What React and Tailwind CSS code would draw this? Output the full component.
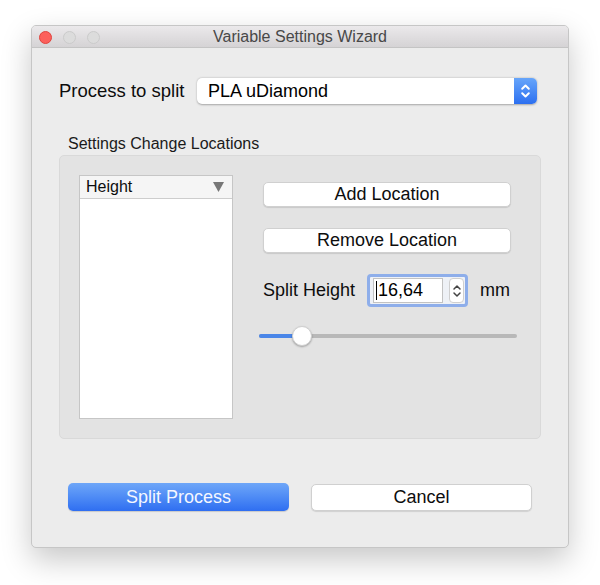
import React from 'react';

const Chevrons = ({ color = '#fff', w = 10, h = 16, sw = 1.6 }) => (
  <svg width={w} height={h} viewBox="0 0 10 16" fill="none">
    <path d="M2 6 L5 3 L8 6" stroke={color} strokeWidth={sw} strokeLinecap="round" strokeLinejoin="round" />
    <path d="M2 10 L5 13 L8 10" stroke={color} strokeWidth={sw} strokeLinecap="round" strokeLinejoin="round" />
  </svg>
);

const MacButton = ({ children, className = '' }) => (
  <button
    className={`flex items-center justify-center bg-white rounded-[5px] border border-[#d0d0d0] shadow-[0_1px_1px_rgba(0,0,0,0.12)] text-[18px] text-[#0d0d0d] ${className}`}
  >
    {children}
  </button>
);

const App = () => {
  return (
    <div
      className="w-[600px] h-[585px] bg-white pt-[25px] pl-[31px]"
      style={{ fontFamily: '"Liberation Sans", Arial, sans-serif' }}
    >
      <div className="w-[538px] h-[523px] flex flex-col rounded-[5px] border border-[#c6c6c6] bg-[#ececec] overflow-hidden shadow-[0_12px_30px_rgba(0,0,0,0.22)]">
        {/* title bar */}
        <div className="h-[22px] shrink-0 grid grid-cols-[1fr_auto_1fr] items-center bg-gradient-to-b from-[#ebe9eb] to-[#d5d3d5] border-b border-[#c4c4c4]">
          <div className="flex items-center gap-[11px] pl-[7px]">
            <span className="w-[13px] h-[13px] rounded-full bg-[#fc605c] border border-[#e0443e]" />
            <span className="w-[13px] h-[13px] rounded-full bg-[#dcdcdc] border border-[#cbcbcb]" />
            <span className="w-[13px] h-[13px] rounded-full bg-[#dcdcdc] border border-[#cbcbcb]" />
          </div>
          <div className="text-[16px] leading-[22px] text-[#484848]">Variable Settings Wizard</div>
          <div />
        </div>

        {/* process row */}
        <div className="mt-[30px] h-[26px] flex items-center pl-[27px] pr-[31px]">
          <span className="text-[18.5px] text-[#0d0d0d]">Process to split</span>
          <div className="ml-auto w-[340px] h-[26px] flex rounded-[5px] bg-white shadow-[0_0.5px_2px_rgba(0,0,0,0.3)]">
            <div className="flex-1 flex items-center pl-[11px] text-[18px] text-[#000]">PLA uDiamond</div>
            <div className="w-[23px] h-full flex items-center justify-center rounded-r-[5px] bg-gradient-to-b from-[#67a5fa] to-[#2c6ff0]">
              <Chevrons w={11} h={18} sw={1.8} />
            </div>
          </div>
        </div>

        {/* settings group */}
        <div className="mt-[31px] pl-[36px] text-[16px] leading-[18px] text-[#1a1a1a]">Settings Change Locations</div>
        <div className="mt-[2px] ml-[27px] w-[482px] h-[284px] flex rounded-[5px] bg-[#e3e3e3] border border-[#d9d9d9] pt-[19px] pl-[19px]">
          <div className="w-[154px] h-[244px] flex flex-col bg-white border border-[#c6c6c6]">
            <div className="h-[23px] flex items-center justify-between pl-[6px] pr-[8px] bg-[#f5f5f5] border-b border-[#cdcdcd]">
              <span className="text-[16px] text-[#0d0d0d]">Height</span>
              <svg width="11" height="10" viewBox="0 0 11 10">
                <polygon points="0,0 11,0 5.5,10" fill="#777" />
              </svg>
            </div>
          </div>

          <div className="ml-[30px] w-[248px] pt-[7px] flex flex-col">
            <MacButton className="h-[25px] w-full">Add Location</MacButton>
            <MacButton className="mt-[21px] h-[25px] w-full">Remove Location</MacButton>

            <div className="mt-[21px] h-[33px] flex items-center">
              <span className="w-[104px] text-[18px] text-[#0d0d0d]">Split Height</span>
              <div className="w-[101px] h-[33px] flex items-center gap-[6px] pl-[3px] rounded-[4px] border-[3px] border-[#8eaeea] bg-[#eef1f6]">
                <div className="w-[70px] h-[25px] flex items-center bg-white border border-[#c2c2c2] pl-[2px] text-[18px] text-[#000]">
                  <span className="w-px h-[19px] bg-[#000] mr-[1px]" />
                  16,64
                </div>
                <div className="w-[15px] h-[25px] flex items-center justify-center rounded-[4px] bg-white border border-[#cfcfcf]">
                  <Chevrons color="#444" w={10} h={18} sw={1.5} />
                </div>
              </div>
              <span className="ml-[12px] text-[18px] text-[#0d0d0d]">mm</span>
            </div>

            <div className="mt-[19px] -ml-[4px] w-[258px] h-[20px] relative flex items-center">
              <div className="w-full h-[4px] flex rounded-full overflow-hidden bg-[#b8b8b8]">
                <div className="w-[43px] h-full bg-[#4a86e8]" />
              </div>
              <div className="absolute left-[33px] top-0 w-[20px] h-[20px] rounded-full bg-white border border-[#d0d0d0] shadow-[0_1px_2px_rgba(0,0,0,0.3)]" />
            </div>
          </div>
        </div>

        {/* bottom buttons */}
        <div className="mt-[44px] pl-[36px] flex items-start gap-[22px]">
          <button className="w-[221px] h-[28px] flex items-center justify-center rounded-[5px] bg-gradient-to-b from-[#6ea6f8] to-[#2f6ef1] text-[18px] text-[#f4f7ff] shadow-[0_1px_1px_rgba(0,0,0,0.15)]">
            Split Process
          </button>
          <MacButton className="mt-[1px] w-[221px] h-[27px]">Cancel</MacButton>
        </div>
      </div>
    </div>
  );
};

export default App;
